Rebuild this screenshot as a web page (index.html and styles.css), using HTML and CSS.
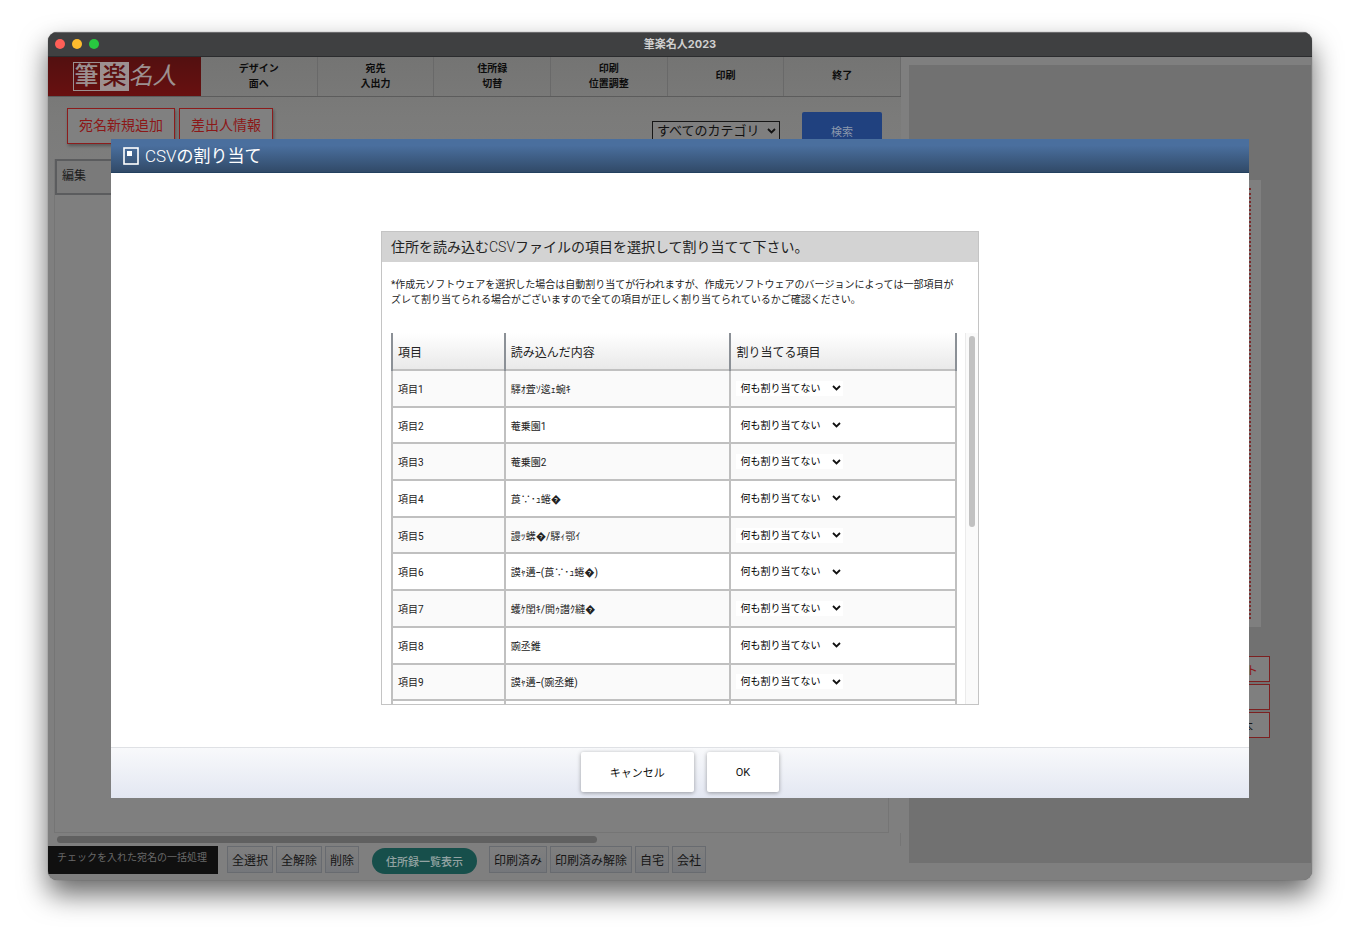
FILE: index.html
```html
<!DOCTYPE html>
<html lang="ja">
<head>
<meta charset="utf-8">
<title>筆楽名人2023</title>
<meta name="viewport" content="width=device-width, initial-scale=1">
<link rel="stylesheet" href="styles.css">
</head>
<body>
<div class="window">
  <header class="titlebar">
    <div class="lights"><span class="light red"></span><span class="light yellow"></span><span class="light green"></span></div>
    <h1 class="window-title">筆楽名人2023</h1>
  </header>
  <div class="app">
    <main class="main">
      <nav class="nav">
        <div class="logo"><span class="seal">筆</span><span class="seal solid">楽</span><span class="brush">名人</span></div>
        <button class="nav-item">デザイン<br>面へ</button>
        <button class="nav-item">宛先<br>入出力</button>
        <button class="nav-item">住所録<br>切替</button>
        <button class="nav-item">印刷<br>位置調整</button>
        <button class="nav-item">印刷</button>
        <button class="nav-item">終了</button>
      </nav>
      <div class="actions">
        <button class="action">宛名新規追加</button>
        <button class="action">差出人情報</button>
        <select class="category" aria-label="カテゴリ"><option>すべてのカテゴリ</option></select>
        <button class="search">検索</button>
      </div>
      <div class="list">
        <div class="list-head">編集</div>
      </div>
      <div class="hscroll"><div class="hthumb"></div></div>
      <div class="bulk">
        <div class="bulk-label">チェックを入れた宛名の一括処理</div>
        <div class="bulk-group">
          <button class="bulk-btn">全選択</button>
          <button class="bulk-btn">全解除</button>
          <button class="bulk-btn">削除</button>
        </div>
        <button class="pill">住所録一覧表示</button>
        <div class="bulk-group">
          <button class="bulk-btn">印刷済み</button>
          <button class="bulk-btn">印刷済み解除</button>
          <button class="bulk-btn">自宅</button>
          <button class="bulk-btn">会社</button>
        </div>
      </div>
    </main>
    <aside class="preview">
      <div class="preview-inner">
        <div class="paper"><div class="paper-guide"></div></div>
        <div class="side-buttons">
          <button class="side-btn">ト</button>
          <button class="side-btn" aria-label="選択"></button>
          <button class="side-btn dark">本</button>
        </div>
      </div>
    </aside>
    <div class="overlay">
      <section class="dialog" role="dialog" aria-labelledby="dialog-title">
        <header class="dialog-head">
          <svg class="dialog-icon" viewBox="0 0 16 18" width="16" height="18" aria-hidden="true"><rect x="1" y="1" width="14" height="16" fill="none" stroke="#fff" stroke-width="1.6"/><rect x="4" y="4" width="5" height="5" fill="#fff"/></svg>
          <h2 class="dialog-title" id="dialog-title"><span class="thin">CSV</span>の割り当て</h2>
        </header>
        <div class="dialog-body">
          <div class="panel">
            <h3 class="panel-title">住所を読み込む<span class="thin">CSV</span>ファイルの項目を選択して割り当てて下さい。</h3>
            <p class="note">*作成元ソフトウェアを選択した場合は自動割り当てが行われますが、作成元ソフトウェアのバージョンによっては一部項目が<br>ズレて割り当てられる場合がございますので全ての項目が正しく割り当てられているかご確認ください。</p>
            <div class="scroll">
              <div class="scroll-view">
                <table class="map">
                  <thead><tr><th>項目</th><th>読み込んだ内容</th><th>割り当てる項目</th></tr></thead>
                  <tbody>
                    <tr><td>項目1</td><td>驛ｵ萓ｿ逡ｪ蜿ｷ</td><td><select class="assign" aria-label="項目1"><option>何も割り当てない</option></select></td></tr>
                    <tr><td>項目2</td><td>菴乗園1</td><td><select class="assign" aria-label="項目2"><option>何も割り当てない</option></select></td></tr>
                    <tr><td>項目3</td><td>菴乗園2</td><td><select class="assign" aria-label="項目3"><option>何も割り当てない</option></select></td></tr>
                    <tr><td>項目4</td><td>莨∵･ｭ蜷�</td><td><select class="assign" aria-label="項目4"><option>何も割り当てない</option></select></td></tr>
                    <tr><td>項目5</td><td>謾ｯ蠎�/驛ｨ鄂ｲ</td><td><select class="assign" aria-label="項目5"><option>何も割り当てない</option></select></td></tr>
                    <tr><td>項目6</td><td>謨ｬ遘ｰ(莨∵･ｭ蜷�)</td><td><select class="assign" aria-label="項目6"><option>何も割り当てない</option></select></td></tr>
                    <tr><td>項目7</td><td>蠖ｹ閨ｷ/閧ｩ譖ｸ縺�</td><td><select class="assign" aria-label="項目7"><option>何も割り当てない</option></select></td></tr>
                    <tr><td>項目8</td><td>豌丞錐</td><td><select class="assign" aria-label="項目8"><option>何も割り当てない</option></select></td></tr>
                    <tr><td>項目9</td><td>謨ｬ遘ｰ(豌丞錐)</td><td><select class="assign" aria-label="項目9"><option>何も割り当てない</option></select></td></tr>
                    <tr><td></td><td></td><td></td></tr>
                  </tbody>
                </table>
              </div>
              <div class="track"><div class="thumb"></div></div>
            </div>
          </div>
        </div>
        <footer class="dialog-foot">
          <button class="dialog-btn">キャンセル</button>
          <button class="dialog-btn">OK</button>
        </footer>
      </section>
    </div>
  </div>
</div>
</body>
</html>
```
FILE: styles.css
```css
* { box-sizing: border-box; }

body {
  margin: 0;
  min-height: 100vh;
  padding: 32px 48px 63px;
  display: flex;
  background: #fff;
  font-family: Roboto, "Noto Sans CJK JP", sans-serif;
  color: #222;
}

button, select {
  font-family: inherit;
  margin: 0;
  cursor: pointer;
}

h1, h2, h3, p { margin: 0; font-weight: 400; }

.thin { font-weight: 300; }

.window {
  flex: 1;
  min-width: 0;
  display: flex;
  flex-direction: column;
  border-radius: 9px;
  overflow: hidden;
  background: #7f7f7f;
  box-shadow: 0 0 1px rgba(0, 0, 0, .6), 0 14px 28px rgba(0, 0, 0, .6);
}

.titlebar {
  height: 25px;
  padding-bottom: 1px;
  display: grid;
  grid-template-columns: 1fr auto 1fr;
  align-items: center;
  background: #3f4041;
  border-top: 1px solid #6a6a6c;
  border-bottom: 1px solid #2b2c2e;
}

.lights { display: flex; gap: 7px; padding-left: 7px; }
.light { width: 10px; height: 10px; border-radius: 50%; }
.red { background: #ff5f57; }
.yellow { background: #febc2e; }
.green { background: #28c840; }

.window-title {
  font-family: Inter, "Noto Sans CJK JP", sans-serif;
  font-size: 11px;
  line-height: 16px;
  font-weight: 700;
  color: #cfcfcf;
}

.app {
  flex: 1;
  position: relative;
  display: grid;
  grid-template-columns: minmax(0, 1fr) 411px;
}

.main {
  display: flex;
  flex-direction: column;
  padding-bottom: 6px;
  background: linear-gradient(#747473, #7b7b7a 60px, #7f7f7f 140px);
}

.nav {
  display: grid;
  grid-template-columns: 153px repeat(6, 1fr);
  height: 40px;
  border-bottom: 1px solid #5c5c5c;
}

.logo {
  display: flex;
  align-items: center;
  justify-content: center;
  background: linear-gradient(#531010, #681010);
  color: #9c9090;
  font-size: 24px;
  line-height: 27px;
}

.seal {
  width: 28px;
  display: flex;
  justify-content: center;
  border: 1px solid #9c9090;
  font-weight: 500;
}
.solid { background: #9c9090; color: #5c1010; }
.brush { font-style: italic; }

.nav-item {
  border: 0;
  border-right: 1px solid #696969;
  padding: 0 0 2px;
  background: none;
  color: #0c0c0c;
  font-size: 10px;
  line-height: 15px;
  font-weight: 700;
}

.actions {
  display: flex;
  align-items: flex-start;
  gap: 4px;
  padding: 11px 19px 10px;
}

.action {
  height: 36px;
  padding: 0 11px 4px;
  border: 1px solid #8c1c1c;
  background: #808080;
  box-shadow: 1px 2px 3px rgba(0, 0, 0, .3);
  color: #8c1818;
  font-size: 14px;
}

.category {
  appearance: none;
  width: 128px;
  height: 20px;
  margin: 13px 18px 0 auto;
  padding: 0 4px;
  border: 1px solid #161616;
  border-radius: 0;
  background: #7f7f7f url("data:image/svg+xml,%3Csvg xmlns='http://www.w3.org/2000/svg' width='9' height='6'%3E%3Cpath d='M1 1l3.500 3.500 3.500-3.500' fill='none' stroke='%23111' stroke-width='1.800'/%3E%3C/svg%3E") no-repeat right 3px center;
  color: #111;
  font-size: 13px;
  line-height: 16px;
}

.search {
  width: 80px;
  height: 37px;
  margin-top: 4px;
  border: 0;
  border-radius: 2px;
  background: #20417f;
  color: #8c98ac;
  font-size: 11px;
}

.list {
  flex: 1;
  margin: 0 12px 0 6px;
  border: solid #757575;
  border-width: 0 1px 1px 1px;
  background: #7f7f7f;
}

.list-head {
  height: 36px;
  padding-left: 5px;
  border: 2px solid #5b5c5e;
  background: #7a7a7a;
  color: #1c1c1c;
  font-size: 12px;
  line-height: 31px;
}

.hscroll { padding: 3px 0 3px 9px; border-right: 1px solid #757575; }
.hthumb { width: 64%; height: 7px; border-radius: 4px; background: #606060; }

.bulk { display: flex; align-items: flex-start; min-height: 28px; }

.bulk-label {
  width: 170px;
  height: 28px;
  padding-left: 9px;
  margin-right: 9px;
  background: #101010;
  color: #696969;
  font-size: 10px;
  line-height: 23px;
  white-space: nowrap;
}

.bulk-group { display: flex; gap: 3px; }

.bulk-btn {
  height: 27px;
  padding: 0 4px;
  border: 1px solid #686b70;
  background: linear-gradient(#7f7f7f, #75777b);
  color: #161616;
  font-size: 12px;
  white-space: nowrap;
}

.pill {
  height: 26px;
  margin: 2px 12px 0 13px;
  padding: 0 14px 1px;
  border: 0;
  border-radius: 13px;
  background: #174f4b;
  color: #93a3a2;
  font-size: 11px;
  font-weight: 500;
  white-space: nowrap;
}

.preview { padding: 8px 1px 17px 8px; background: #7f7f7f; }
.preview-inner { height: 100%; padding: 115px 41px 0 0; background: #717171; }

.paper {
  width: 320px;
  height: 447px;
  margin: 0 9px 0 auto;
  padding: 8px 10px;
  background: #7f7f7f;
}

.paper-guide { height: 100%; border: 2px dotted #7a2a2a; }

.side-buttons {
  width: 120px;
  margin: 29px 0 0 auto;
  display: grid;
  gap: 2px;
}

.side-btn {
  height: 26px;
  padding: 0 11px;
  border: 1px solid #7c2020;
  background: #7f7f7f;
  color: #8c1818;
  font-size: 12px;
  text-align: right;
}
.dark { color: #161616; padding-right: 16px; }

.overlay {
  position: absolute;
  inset: 0;
  padding: 82px 63px;
  display: flex;
}

.dialog {
  flex: 1;
  min-width: 0;
  display: flex;
  flex-direction: column;
  background: #fff;
}

.dialog-head {
  height: 34px;
  display: flex;
  align-items: center;
  gap: 6px;
  padding-left: 12px;
  background: linear-gradient(#4a6f9e 20%, #314a68);
  border-bottom: 1px solid #23405f;
  color: #fff;
}

.dialog-title { font-size: 17px; line-height: 24px; }

.dialog-body {
  flex: 1;
  display: flex;
  justify-content: center;
  padding: 58px 16px 42px;
}

.panel {
  width: 598px;
  display: flex;
  flex-direction: column;
  border: 1px solid #c4c4c4;
}

.panel-title {
  padding: 0 9px;
  background: #d3d3d3;
  font-size: 14px;
  line-height: 30px;
}

.note {
  padding: 15px 9px 26px;
  font-size: 10px;
  line-height: 15px;
}

.scroll {
  flex: 1;
  display: flex;
  justify-content: space-between;
  padding-left: 9px;
}

.scroll-view {
  flex: 1;
  height: 371px;
  margin-right: 8px;
  overflow: hidden;
}

.map {
  width: 100%;
  height: 405px;
  table-layout: fixed;
  border-collapse: collapse;
}

.map th, .map td { padding: 0 5px; text-align: left; font-weight: 400; }

.map th {
  height: 37px;
  border: solid #8b9096;
  border-width: 0 2px;
  background: linear-gradient(#fff, #e9e9e9);
  font-size: 12px;
}
.map th:nth-child(1) { width: 20%; }
.map th:nth-child(2), .map th:nth-child(3) { width: 40%; }

.map td { height: 36px; border: 2px solid #c0c0c0; font-size: 10px; }
.map tbody tr:nth-child(odd) td { background: #fafafa; }

.assign {
  appearance: none;
  display: block;
  width: 107px;
  height: 15px;
  padding: 0 4px;
  border: 0;
  border-radius: 0;
  background: #fff url("data:image/svg+xml,%3Csvg xmlns='http://www.w3.org/2000/svg' width='9' height='6'%3E%3Cpath d='M1 1l3.500 3.500 3.500-3.500' fill='none' stroke='%23111' stroke-width='1.800'/%3E%3C/svg%3E") no-repeat right 2px center;
  color: #000;
  font-size: 10px;
  line-height: 15px;
}

.track { width: 13px; padding: 3px 3px; border-left: 1px solid #ebebeb; background: #fafafa; }
.thumb { height: 191px; border-radius: 4px; background: #c1c1c1; }

.dialog-foot {
  height: 51px;
  padding-bottom: 2px;
  display: flex;
  justify-content: center;
  align-items: center;
  gap: 13px;
  border-top: 1px solid #dfe1e5;
  background: linear-gradient(#f8f9fb, #e3e7f2);
}

.dialog-btn {
  height: 40px;
  padding: 0 29px;
  border: 0;
  border-radius: 2px;
  background: #fff;
  box-shadow: 0 1px 4px rgba(0, 0, 0, .35);
  color: #111;
  font-size: 11px;
}
```
